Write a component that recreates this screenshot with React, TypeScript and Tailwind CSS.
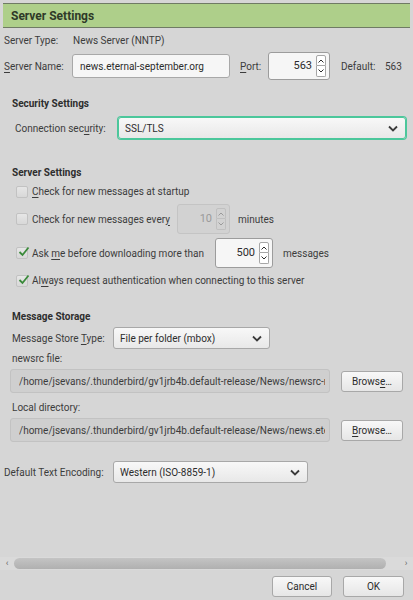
import React from "react";

const font = { fontFamily: "Roboto, 'Liberation Sans', sans-serif" };

function U({ children }: { children: React.ReactNode }) {
  return <span className="underline underline-offset-2">{children}</span>;
}

function Spin({ value, disabled, className }: { value: string; disabled?: boolean; className: string }) {
  return (
    <div
      className={`flex items-center rounded-[3px] border pl-1 pr-[3px] ${
        disabled ? "border-[#c4c4c4] bg-[#d2d2d2] text-[#9a9a9a]" : "border-[#9c9c9c] bg-[#f6f6f6] text-[#2c2c2c]"
      } ${className}`}
    >
      <span className="flex-1 pr-1 text-right text-[11px]">{value}</span>
      <div className="flex flex-col">
        <span className={`flex h-[11px] w-[10px] items-center justify-center rounded-t-[2px] border ${disabled ? "border-[#c0c0c0]" : "border-[#a6a6a6] bg-white"}`}>
          <svg width="6" height="4" viewBox="0 0 6 4"><path d="M0.5 3.5 L3 1 L5.5 3.5" fill="none" stroke="currentColor" strokeWidth="1" /></svg>
        </span>
        <span className={`flex h-[11px] w-[10px] items-center justify-center rounded-b-[2px] border border-t-0 ${disabled ? "border-[#c0c0c0]" : "border-[#a6a6a6] bg-white"}`}>
          <svg width="6" height="4" viewBox="0 0 6 4"><path d="M0.5 0.5 L3 3 L5.5 0.5" fill="none" stroke="currentColor" strokeWidth="1" /></svg>
        </span>
      </div>
    </div>
  );
}

function Chevron() {
  return (
    <svg width="10" height="7" viewBox="0 0 10 7" className="text-[#3a3a3a]">
      <path d="M1 1.5 L5 5.5 L9 1.5" fill="none" stroke="currentColor" strokeWidth="1.8" />
    </svg>
  );
}

function Select({ value, className, focus }: { value: string; className: string; focus?: boolean }) {
  return (
    <div
      className={`flex h-[22px] items-center justify-between rounded-[3px] border bg-gradient-to-b from-[#f8f8f8] to-[#e8e8e8] pl-[6px] pr-[7px] text-[#2c2c2c] ${
        focus ? "border-[#4bc79b] ring-1 ring-[#4bc79b]" : "border-[#a8a8a8]"
      } ${className}`}
    >
      <span>{value}</span>
      <Chevron />
    </div>
  );
}

function Check({ checked, children }: { checked?: boolean; children: React.ReactNode }) {
  return (
    <div className="flex items-center gap-[4px] whitespace-nowrap">
      <span className="relative flex h-[12px] w-[12px] shrink-0 items-center justify-center rounded-[2px] border border-[#c2c2c2] bg-gradient-to-b from-[#e6e6e6] to-[#d8d8d8]">
        {checked && (
          <svg width="12" height="11" viewBox="0 0 12 11" className="absolute -top-[2px] left-[1px]">
            <path d="M1.5 6 L4.5 9 L10.5 1.5" fill="none" stroke="#3a8a3a" strokeWidth="1.8" />
          </svg>
        )}
      </span>
      <span>{children}</span>
    </div>
  );
}

function Button({ children, className }: { children: React.ReactNode; className: string }) {
  return (
    <div
      className={`flex h-[21px] items-center justify-center rounded-[3px] border border-[#a8a8a8] bg-gradient-to-b from-[#f8f8f8] to-[#e6e6e6] text-[#2c2c2c] ${className}`}
    >
      {children}
    </div>
  );
}

function PathField({ value }: { value: string }) {
  return (
    <div className="flex h-[24px] w-[320px] items-center overflow-hidden whitespace-nowrap rounded-[3px] border border-[#c2c2c2] bg-[#cfcfcf] pl-[8px] text-[#3c3c3c]">
      <span className="block w-[306px] overflow-hidden text-clip">{value}</span>
    </div>
  );
}

export default function App() {
  return (
    <div className="flex h-[600px] w-[413px] flex-col whitespace-nowrap bg-[#d6d6d6] text-[10px] text-[#3c3c3c]" style={font}>
      <div className="mx-[3px] mt-[3px] flex h-[25px] items-center border-y border-[#6f7b64] bg-[#aecf8a] pl-[8px] text-[12px] font-bold text-[#2e3a28]">
        Server Settings
      </div>

      <div className="mt-[5px] flex items-center pl-[4px]">
        <span className="w-[69px]">Server Type:</span>
        <span>News Server (NNTP)</span>
      </div>

      <div className="mt-[4px] flex items-center pl-[4px]">
        <span className="w-[68px]">
          <U>S</U>erver Name:
        </span>
        <div className="flex h-[24px] w-[158px] items-center rounded-[3px] border border-[#a8a8a8] bg-[#f6f6f6] pl-[7px] text-[#2c2c2c]">
          news.eternal-september.org
        </div>
        <span className="ml-[10px] w-[28px]">
          <U>P</U>ort:
        </span>
        <Spin value="563" className="h-[28px] w-[62px]" />
        <span className="ml-[11px] w-[44px]">Default:</span>
        <span>563</span>
      </div>

      <div className="mt-[16px] pl-[12px] font-bold text-[#2e2e2e]">Security Settings</div>
      <div className="mt-[6px] flex items-center pl-[15px]">
        <span className="w-[103px]">
          Connection sec<U>u</U>rity:
        </span>
        <Select value="SSL/TLS" focus className="w-[288px]" />
      </div>

      <div className="mt-[26px] pl-[12px] font-bold text-[#2e2e2e]">Server Settings</div>
      <div className="mt-[4px] pl-[16px]">
        <Check>
          <U>C</U>heck for new messages at startup
        </Check>
      </div>
      <div className="mt-[5px] flex items-center pl-[16px]">
        <div className="w-[161px]">
          <Check>
            Check for new messages ever<U>y</U>
          </Check>
        </div>
        <Spin value="10" disabled className="h-[30px] w-[53px]" />
        <span className="ml-[8px]">minutes</span>
      </div>
      <div className="mt-[4px] flex items-center pl-[16px]">
        <div className="w-[199px]">
          <Check checked>
            Ask <U>m</U>e before downloading more than
          </Check>
        </div>
        <Spin value="500" className="h-[30px] w-[58px]" />
        <span className="ml-[10px]">messages</span>
      </div>
      <div className="mt-[5px] pl-[16px]">
        <Check checked>
          Al<U>w</U>ays request authentication when connecting to this server
        </Check>
      </div>

      <div className="mt-[21px] pl-[12px] font-bold text-[#2e2e2e]">Message Storage</div>
      <div className="mt-[3px] flex items-center pl-[12px]">
        <span className="w-[101px]">
          Message Store <U>T</U>ype:
        </span>
        <Select value="File per folder (mbox)" className="w-[157px]" />
      </div>
      <div className="mt-[2px] pl-[12px]">newsrc file:</div>
      <div className="mt-[3px] flex items-center pl-[10px]">
        <PathField value="/home/jsevans/.thunderbird/gv1jrb4b.default-release/News/newsrc-news.eternal-september.org" />
        <Button className="ml-[11px] w-[62px]">
          <span>
            Brows<U>e</U>…
          </span>
        </Button>
      </div>
      <div className="mt-[7px] pl-[12px]">Local directory:</div>
      <div className="mt-[3px] flex items-center pl-[10px]">
        <PathField value="/home/jsevans/.thunderbird/gv1jrb4b.default-release/News/news.eternal-september.org" />
        <Button className="ml-[11px] w-[62px]">
          <span>
            <U>B</U>rowse…
          </span>
        </Button>
      </div>

      <div className="mt-[19px] flex items-center pl-[4px]">
        <span className="w-[109px]">Default Text Encoding:</span>
        <Select value="Western (ISO-8859-1)" className="w-[195px]" />
      </div>

      <div className="mt-auto flex h-[13px] items-center bg-[#dadada]">
        <span className="flex w-[14px] justify-center text-[9px] text-[#666]">‹</span>
        <div className="h-[11px] w-[372px] rounded-full bg-gradient-to-b from-[#c4c4c4] to-[#b0b0b0]" />
        <span className="ml-auto flex w-[14px] justify-center text-[9px] text-[#666]">›</span>
      </div>
      <div className="mb-[3px] mt-[6px] flex justify-end gap-[11px] pr-[9px]">
        <Button className="w-[60px]">Cancel</Button>
        <Button className="w-[61px]">OK</Button>
      </div>
    </div>
  );
}
